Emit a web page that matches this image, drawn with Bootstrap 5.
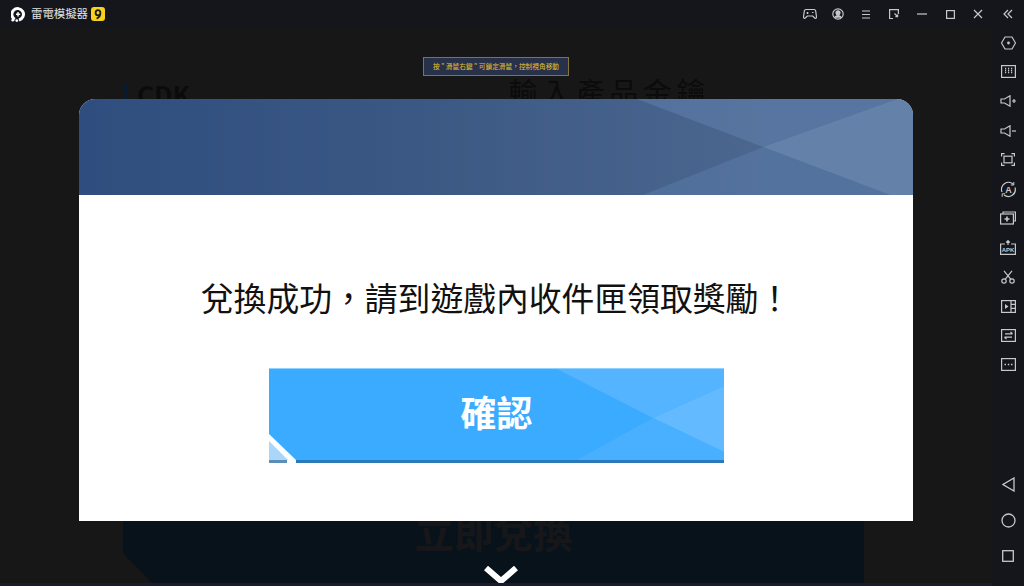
<!DOCTYPE html>
<html lang="zh-TW">
<head>
    <meta charset="UTF-8">
    <meta name="viewport" content="width=device-width, initial-scale=1.0">
    <title>雷電模擬器</title>
    <link href="https://cdn.jsdelivr.net/npm/bootstrap@5.3.0/dist/css/bootstrap.min.css" rel="stylesheet">
    <style>
        html, body { height: 586px; overflow: hidden; background: #14161b; }
        body { font-family: "Liberation Sans", "Noto Sans CJK TC", sans-serif; }
        .cjk-text { font-family: "Noto Sans CJK TC", sans-serif; }
        .app-shell { width: 1024px; height: 586px; }

        /* title bar */
        .title-bar { height: 28px; background: #14161b; padding: 0 2px 0 11px; }
        .app-name { font-size: 11.4px; color: #e2e2e2; margin-left: 6px; line-height: 1; }
        .version-tag { width: 14px; height: 14px; margin-left: 3px; background: #f7d21e; border-radius: 3px; }
        .win-icon { width: 28px; height: 28px; }
        .win-icon svg, .side-icon svg { fill: none; stroke: #c6c8cc; stroke-width: 1.2; }
        .win-tools .win-icon:last-child { margin-left: 2px; }
        .icon-word { font-family: "Liberation Sans", sans-serif; font-weight: 700; fill: #c6c8cc; stroke: none; }

        /* emulator screen */
        .game-screen { background: #171717; width: 992px; border-bottom: 3px solid #1b1b2b; }
        .head-row { height: 71px; padding-left: 123px; }
        .cdk-bar { width: 5px; height: 20px; background: #0a1a2c; margin-top: 56px; }
        .cdk-title { font-size: 26px; font-weight: 700; color: #0b0b0b; margin: 49px 0 0 9px; line-height: 1.3; }
        .redeem-title { font-size: 29px; letter-spacing: 4.6px; color: #0b0b0b; margin: 45px 0 0 318px; line-height: 1.3; white-space: nowrap; }
        .redeem-panel { margin: 0 128px 0 123px; width: 741px; height: 197px; background: #07121a; clip-path: polygon(0 0, 100% 0, 100% 100%, 29px 100%, 0 167px); }
        .redeem-label { font-size: 39.5px; font-weight: 700; color: #17171a; line-height: 1; padding-bottom: 33px; }
        .down-arrow { bottom: -1px; left: 483px; }

        .hint-box { left: 423px; top: 29px; width: 146px; height: 19px; background: #28314a; border: 1px solid #85743a; color: #e5c02f; font-size: 6.7px; line-height: 1; white-space: nowrap; }

        /* dialog */
        .notice-box { left: 79px; top: 71px; width: 834px; height: 422px; background: #fff; border-radius: 16px 16px 0 0; overflow: hidden; }
        .notice-head { height: 96px; background: linear-gradient(90deg, #2f4d7e 0%, #3b5884 40%, #4b678f 82%); }
        .notice-text { font-size: 32.8px; line-height: 1.3; color: #111; margin-top: 81px; white-space: nowrap; }
        .confirm-btn { width: 455px; height: 95px; margin: 49px 0 0 190px; border: 0; border-radius: 0; background: transparent; padding: 0; }
        .confirm-btn:hover, .confirm-btn:active { background: transparent; }
        .confirm-art { left: 0; top: 0; }
        .confirm-label { font-size: 36px; font-weight: 700; color: #fff; line-height: 1; padding-bottom: 8px; }

        /* right toolbar */
        .side-bar { width: 32px; height: 558px; background: #14161b; padding-bottom: 12px; }
        .side-icon { height: 29.3px; }
        .nav-icon { height: 36px; }
    </style>
</head>
<body>
<div class="app-shell d-flex flex-column">

    <!-- title bar -->
    <div class="title-bar d-flex align-items-center flex-shrink-0">
        <svg width="14" height="15" viewBox="0 0 14 15">
            <path d="M3.800 12.400A5.800 5.800 0 1 1 8 13" fill="none" stroke="#fff" stroke-width="3"/>
            <path d="M5 7.200h4.200M7 5v4.400" stroke="#fff" stroke-width="1.400"/>
            <circle cx="1.800" cy="13.200" r="1.400" fill="#fff"/>
            <circle cx="5.800" cy="13.600" r="1.400" fill="#fff"/>
        </svg>
        <span class="app-name cjk-text">雷電模擬器</span>
        <span class="version-tag d-flex align-items-center justify-content-center">
            <svg width="8" height="11" viewBox="0 0 8 11"><path d="M6.400 3.800a2.400 2.600 0 1 1-4.800 0 2.400 2.600 0 1 1 4.800 0M6.400 4C6.400 7 5 8.600 2.600 9.600" fill="none" stroke="#1a1a1a" stroke-width="1.800"/></svg>
        </span>
        <div class="win-tools ms-auto d-flex">
            <span class="win-icon d-flex align-items-center justify-content-center">
                <svg width="14" height="12" viewBox="0 0 14 12"><path d="M3 1.500h8c1 0 1.500.6 1.700 1.500l.8 6c.1 1.200-1 1.700-1.800 1l-2-2H4.300l-2 2c-.8.7-1.900.2-1.800-1l.8-6C1.500 2.100 2 1.500 3 1.500z"/><path d="M3.500 5h2M4.500 4v2M9 4.500h1.500"/></svg>
            </span>
            <span class="win-icon d-flex align-items-center justify-content-center">
                <svg width="12" height="12" viewBox="0 0 12 12"><circle cx="6" cy="6" r="5.200"/><circle cx="6" cy="4.800" r="2" fill="#c6c8cc"/><path d="M2.500 9.800c.8-1.700 2-2.300 3.500-2.300s2.700.6 3.500 2.300" fill="#c6c8cc"/></svg>
            </span>
            <span class="win-icon d-flex align-items-center justify-content-center">
                <svg width="10" height="9" viewBox="0 0 10 9"><path d="M1 1h8M1 4.500h8M1 8h8"/></svg>
            </span>
            <span class="win-icon d-flex align-items-center justify-content-center">
                <svg width="10" height="10" viewBox="0 0 10 10"><path d="M4 9.500H.6V.6h8.800V5"/><path d="M5.500 4.500l3 3M8.600 5.500v2.200H6.400"/></svg>
            </span>
            <span class="win-icon d-flex align-items-center justify-content-center">
                <svg width="10" height="2" viewBox="0 0 10 2"><path d="M0 1h10"/></svg>
            </span>
            <span class="win-icon d-flex align-items-center justify-content-center">
                <svg width="9" height="9" viewBox="0 0 9 9"><rect x=".6" y=".6" width="7.800" height="7.800"/></svg>
            </span>
            <span class="win-icon d-flex align-items-center justify-content-center">
                <svg width="10" height="10" viewBox="0 0 10 10"><path d="M1 1l8 8M9 1l-8 8"/></svg>
            </span>
            <span class="win-icon d-flex align-items-center justify-content-center">
                <svg width="10" height="10" viewBox="0 0 10 10"><path d="M5 1L1 5l4 4M9 1L5 5l4 4"/></svg>
            </span>
        </div>
    </div>

    <div class="d-flex flex-grow-1">
        <!-- emulator screen -->
        <div class="game-screen position-relative d-flex flex-column flex-shrink-0 overflow-hidden">
            <div class="head-row d-flex cjk-text flex-shrink-0">
                <div class="cdk-bar"></div>
                <div class="cdk-title">CDK</div>
                <div class="redeem-title">輸入產品金鑰</div>
            </div>
            <div class="redeem-panel mt-auto d-flex align-items-end justify-content-center">
                <div class="redeem-label cjk-text">立即兌換</div>
            </div>
            <svg class="down-arrow position-absolute" width="36" height="18" viewBox="0 0 36 18"><path d="M3 2l15 13L33 2" fill="none" stroke="#fff" stroke-width="6"/></svg>

            <div class="hint-box position-absolute d-flex align-items-center justify-content-center cjk-text">按 " 滑鼠右鍵 " 可鎖定滑鼠&#xFF0C;控制視角移動</div>

            <!-- dialog -->
            <div class="notice-box position-absolute">
                <div class="notice-head">
                    <svg width="834" height="96" viewBox="0 0 834 96" class="d-block">
                        <polygon points="558,0 818,0 684,48" fill="#6f90c0" opacity=".35"/>
                        <polygon points="684,48 818,0 834,0 834,96 811,96" fill="#7b9cc4" opacity=".5"/>
                        <polygon points="564,96 811,96 684,48" fill="#6486b8" opacity=".35"/>
                    </svg>
                </div>
                <div class="notice-text cjk-text text-center">兌換成功&#xFF0C;請到遊戲內收件匣領取獎勵&#xFF01;</div>
                <button type="button" class="btn confirm-btn position-relative d-flex align-items-center justify-content-center cjk-text">
                    <svg class="confirm-art position-absolute" width="455" height="95" viewBox="0 0 455 95">
                        <polygon points="0,0 455,0 455,92 27,92 0,66" fill="#3babff"/>
                        <polygon points="286,0 455,0 455,18 384,50" fill="#54b4ff"/>
                        <polygon points="384,50 455,18 455,84" fill="#64baff"/>
                        <polygon points="308,92 455,92 455,84 384,50" fill="#49b0ff"/>
                        <rect x="0" y="0" width="455" height="1" fill="#8fd2ff"/>
                        <rect x="27" y="92" width="428" height="3" fill="#2c79ba"/>
                        <polygon points="0,73 0,92 19,92" fill="#a9d7fb"/>
                        <rect x="0" y="92" width="18" height="3" fill="#5b8fb8"/>
                    </svg>
                    <span class="confirm-label position-relative">確認</span>
                </button>
            </div>
        </div>

        <!-- right toolbar -->
        <div class="side-bar d-flex flex-column flex-shrink-0">
            <span class="side-icon d-flex align-items-center justify-content-center">
                <svg width="15" height="14" viewBox="0 0 15 14"><path d="M4 1h7l3.500 6L11 13H4L.5 7z"/><circle cx="7.500" cy="7" r="1.400" fill="#c6c8cc" stroke="none"/></svg>
            </span>
            <span class="side-icon d-flex align-items-center justify-content-center">
                <svg width="15" height="13" viewBox="0 0 15 13"><rect x=".6" y=".6" width="13.800" height="11.800"/><path d="M4 3.500h1.200M7 3.500h1.200M10 3.500h1.200M4 5.500h1.200M7 5.500h1.200M10 5.500h1.200M4 7.500h1.200M7 7.500h1.200M10 7.500h1.200" stroke-width="1.300"/></svg>
            </span>
            <span class="side-icon d-flex align-items-center justify-content-center">
                <svg width="16" height="12" viewBox="0 0 16 12"><path d="M1 4h3.500L10 .8v10.400L4.500 8H1z"/><path d="M12 6h4M14 4v4"/></svg>
            </span>
            <span class="side-icon d-flex align-items-center justify-content-center">
                <svg width="16" height="12" viewBox="0 0 16 12"><path d="M1 4h3.500L10 .8v10.400L4.500 8H1z"/><path d="M12 6h4"/></svg>
            </span>
            <span class="side-icon d-flex align-items-center justify-content-center">
                <svg width="14" height="13" viewBox="0 0 14 13"><path d="M.6 3.500V.6h3M10.400.6h3v2.900M13.400 9.500v2.900h-3M3.600 12.400h-3V9.500"/><rect x="3" y="3.200" width="8" height="6.600"/></svg>
            </span>
            <span class="side-icon d-flex align-items-center justify-content-center">
                <svg width="17" height="17" viewBox="0 0 17 17"><path d="M2 11A7 7 0 0 1 13.500 3.500M15 6.500A7 7 0 0 1 4 14"/><path d="M13.800 1v3h-3M2.200 15.800v-3h3" stroke-width="1"/><text class="icon-word" x="8.500" y="11.500" font-size="9" text-anchor="middle">A</text></svg>
            </span>
            <span class="side-icon d-flex align-items-center justify-content-center">
                <svg width="16" height="14" viewBox="0 0 16 14"><path d="M3 3V1h12.400v9H13.500"/><rect x=".6" y="3" width="12.800" height="10"/><path d="M7 5.500v5M4.500 8h5" stroke-width="1.600"/></svg>
            </span>
            <span class="side-icon d-flex align-items-center justify-content-center">
                <svg width="16" height="15" viewBox="0 0 16 15"><path d="M5 4H.6v10.400h14.800V4H11"/><path d="M8 5V.5M6.200 2.500L8 .7l1.800 1.800"/><text class="icon-word" x="8" y="12" font-size="6" text-anchor="middle">APK</text></svg>
            </span>
            <span class="side-icon d-flex align-items-center justify-content-center">
                <svg width="14" height="14" viewBox="0 0 14 14"><circle cx="3" cy="11" r="2.200"/><circle cx="11" cy="11" r="2.200"/><path d="M4.300 9.200L11 .8M9.700 9.200L3 .8"/></svg>
            </span>
            <span class="side-icon d-flex align-items-center justify-content-center">
                <svg width="15" height="13" viewBox="0 0 15 13"><rect x=".6" y=".6" width="13.800" height="11.800"/><path d="M10 .6v11.800M10 4.400h4.400M10 8.400h4.400"/><path d="M4 4l3.500 2.500L4 9z" fill="#c6c8cc" stroke="none"/></svg>
            </span>
            <span class="side-icon d-flex align-items-center justify-content-center">
                <svg width="15" height="13" viewBox="0 0 15 13"><rect x=".6" y=".6" width="13.800" height="11.800"/><path d="M4 4.800h7.500M9.500 3l2 1.800M11 8.200H3.500M5.500 10L3.500 8.200" stroke-width="1.300"/></svg>
            </span>
            <span class="side-icon d-flex align-items-center justify-content-center">
                <svg width="15" height="13" viewBox="0 0 15 13"><rect x=".6" y=".6" width="13.800" height="11.800"/><path d="M3.500 6.500h1.500M6.800 6.500h1.500M10 6.500h1.500" stroke-width="1.500"/></svg>
            </span>

            <span class="nav-icon mt-auto d-flex align-items-center justify-content-center">
                <svg width="13" height="15" viewBox="0 0 13 15" fill="none" stroke="#c6c8cc" stroke-width="1.300"><path d="M12 1v13L1 7.500z"/></svg>
            </span>
            <span class="nav-icon d-flex align-items-center justify-content-center">
                <svg width="15" height="15" viewBox="0 0 15 15" fill="none" stroke="#c6c8cc" stroke-width="1.300"><circle cx="7.500" cy="7.500" r="6.500"/></svg>
            </span>
            <span class="nav-icon d-flex align-items-center justify-content-center">
                <svg width="12" height="12" viewBox="0 0 12 12" fill="none" stroke="#c6c8cc" stroke-width="1.300"><rect x=".7" y=".7" width="10.600" height="10.600"/></svg>
            </span>
        </div>
    </div>
</div>
<script src="https://cdn.jsdelivr.net/npm/bootstrap@5.3.0/dist/js/bootstrap.bundle.min.js"></script>
</body>
</html>
